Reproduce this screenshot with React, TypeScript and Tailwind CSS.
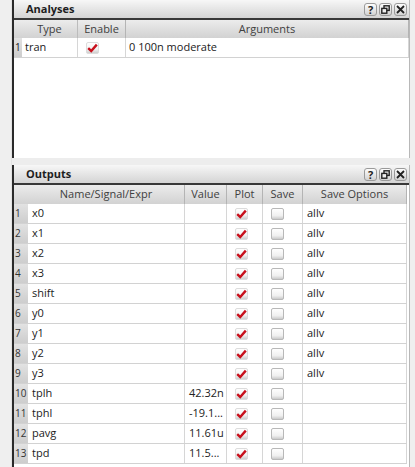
import React from "react";

const font = { fontFamily: '"Open Sans", "Noto Sans", sans-serif' };

function Checked() {
  return (
    <svg width="13" height="12" viewBox="0 0 13 12">
      <defs>
        <linearGradient id="cbg" x1="0" y1="0" x2="0" y2="1">
          <stop offset="0" stopColor="#ffffff" />
          <stop offset="0.6" stopColor="#f2f2f2" />
          <stop offset="1" stopColor="#c9c9c9" />
        </linearGradient>
      </defs>
      <rect x="0.5" y="0.5" width="12" height="11" rx="1.5" fill="url(#cbg)" stroke="#dcdcdc" />
      <path d="M2.2 6.2 L5.2 9 L10.8 2.6" fill="none" stroke="#c8101c" strokeWidth="2.4" strokeLinejoin="miter" />
    </svg>
  );
}

function Unchecked() {
  return (
    <svg width="13" height="12" viewBox="0 0 13 12">
      <defs>
        <linearGradient id="ubg" x1="0" y1="0" x2="0" y2="1">
          <stop offset="0" stopColor="#ffffff" />
          <stop offset="0.65" stopColor="#f0f0f0" />
          <stop offset="1" stopColor="#c4c4c4" />
        </linearGradient>
      </defs>
      <rect x="0.5" y="0.5" width="12" height="11" rx="1.5" fill="url(#ubg)" stroke="#b8b8b8" />
    </svg>
  );
}

function TitleButtons() {
  const btn =
    "w-[13px] h-[13px] rounded-[3px] border border-[#9a9a9a] bg-gradient-to-b from-[#fdfdfd] to-[#d2d2d2] flex items-center justify-center text-[11px] font-bold leading-none text-[#222]";
  return (
    <div className="flex gap-[2px] pr-[2px]">
      <div className={btn}>?</div>
      <div className={btn}>
        <svg width="9" height="9" viewBox="0 0 9 9">
          <rect x="3" y="0.8" width="5.2" height="4.6" fill="none" stroke="#222" strokeWidth="1.4" />
          <rect x="0.8" y="3.4" width="5" height="4.8" fill="#eee" stroke="#222" strokeWidth="1.4" />
        </svg>
      </div>
      <div className={btn}>
        <svg width="9" height="9" viewBox="0 0 9 9">
          <path d="M1 1 L8 8 M8 1 L1 8" stroke="#222" strokeWidth="1.8" />
        </svg>
      </div>
    </div>
  );
}

function TitleBar({ title }: { title: string }) {
  return (
    <div className="h-[20px] shrink-0 flex items-center justify-between bg-gradient-to-b from-[#f7f7f7] to-[#d4d4d4] border-b-2 border-[#383838]">
      <span className="pl-[12px] text-[11px] font-bold text-[#1e1e1e]">{title}</span>
      <TitleButtons />
    </div>
  );
}

const hdr =
  "h-full flex items-center justify-center text-[11px] text-[#404040] border-r border-[#b4b4b4] bg-gradient-to-b from-[#ececec] to-[#d2d2d2]";

function Analyses() {
  return (
    <div className="h-[158px] flex flex-col bg-white border-l-2 border-[#2a2a2a] border-r border-r-[#b8b8b8]">
      <TitleBar title="Analyses" />
      <div className="h-[18px] flex shrink-0">
        <div className={`${hdr} w-[64px] border-r-[#bcbcbc]`}>
          <span className="pl-[8px]">Type</span>
        </div>
        <div className={`${hdr} w-[48px]`}>Enable</div>
        <div className={`${hdr} flex-1`}>Arguments</div>
      </div>
      <div className="h-[20px] flex text-[11px] text-[#222] border-b border-[#d2d2d2] w-[395px]">
        <div className="w-[8px] bg-gradient-to-b from-[#e2e2e2] to-[#cdcdcd] flex items-center text-[10px] pl-[1px]">1</div>
        <div className="w-[56px] flex items-center pl-[3px] border-r border-[#d6d6d6]">tran</div>
        <div className="w-[48px] flex items-center pl-[8px] border-r border-[#d6d6d6]">
          <Checked />
        </div>
        <div className="flex-1 flex items-center pl-[3px] border-r border-[#d6d6d6]">0 100n moderate</div>
      </div>
    </div>
  );
}

type Row = { name: string; value: string; opt: string };

const rows: Row[] = [
  { name: "x0", value: "", opt: "allv" },
  { name: "x1", value: "", opt: "allv" },
  { name: "x2", value: "", opt: "allv" },
  { name: "x3", value: "", opt: "allv" },
  { name: "shift", value: "", opt: "allv" },
  { name: "y0", value: "", opt: "allv" },
  { name: "y1", value: "", opt: "allv" },
  { name: "y2", value: "", opt: "allv" },
  { name: "y3", value: "", opt: "allv" },
  { name: "tplh", value: "42.32n", opt: "" },
  { name: "tphl", value: "-19.1...", opt: "" },
  { name: "pavg", value: "11.61u", opt: "" },
  { name: "tpd", value: "11.5...", opt: "" },
];

function Outputs() {
  const cell = "h-full flex items-center border-r border-[#d6d6d6]";
  return (
    <div className="flex-1 flex flex-col bg-white border-l-2 border-[#2a2a2a] border-r border-r-[#b8b8b8]">
      <TitleBar title="Outputs" />
      <div className="h-[19px] flex shrink-0 w-[393px]">
        <div className={`${hdr} w-[171px]`}>
          <span className="pl-[14px]">Name/Signal/Expr</span>
        </div>
        <div className={`${hdr} w-[42px]`}>Value</div>
        <div className={`${hdr} w-[36px]`}>Plot</div>
        <div className={`${hdr} w-[40px]`}>Save</div>
        <div className={`${hdr} flex-1`}>Save Options</div>
      </div>
      {rows.map((r, i) => (
        <div key={r.name} className="h-[20px] flex text-[11px] text-[#222] border-b border-[#d2d2d2] w-[393px]">
          <div className="w-[14px] bg-gradient-to-b from-[#e2e2e2] to-[#cdcdcd] flex items-center text-[10px] pl-[1px] text-[#333]">
            {i + 1}
          </div>
          <div className={`${cell} w-[157px] pl-[4px]`}>{r.name}</div>
          <div className={`${cell} w-[42px] pl-[4px]`}>{r.value}</div>
          <div className={`${cell} w-[36px] pl-[8px]`}>
            <Checked />
          </div>
          <div className={`${cell} w-[40px] pl-[8px]`}>
            <Unchecked />
          </div>
          <div className={`${cell} flex-1 pl-[4px]`}>{r.opt}</div>
        </div>
      ))}
    </div>
  );
}

export default function App() {
  return (
    <div style={font} className="w-[415px] h-[467px] overflow-hidden bg-[#ededed] flex">
      <div className="w-[12px] shrink-0 bg-[#efefef] border-r border-[#e2e2e2]" />
      <div className="w-[398px] flex flex-col gap-[7px]">
        <Analyses />
        <Outputs />
      </div>
      <div className="flex-1 bg-[#efefef]" />
    </div>
  );
}
